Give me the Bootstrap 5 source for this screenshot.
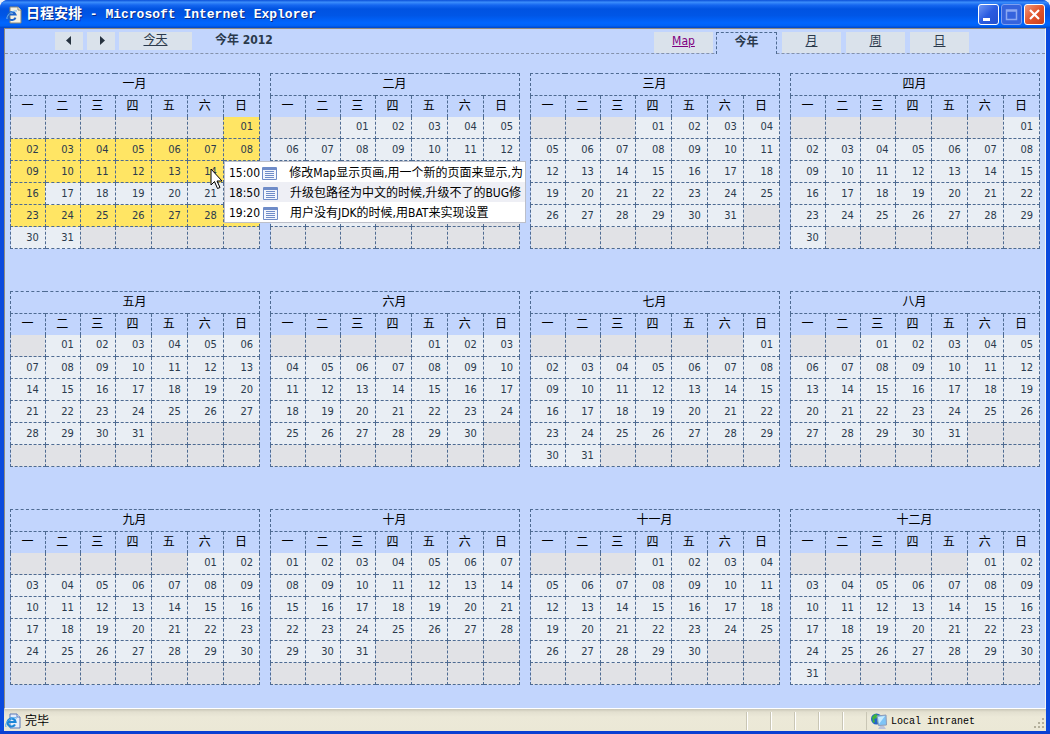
<!DOCTYPE html>
<html lang="zh-CN">
<head>
<meta charset="utf-8">
<meta name="viewport" content="width=device-width, initial-scale=1">
<title>日程安排</title>
<link href="https://cdn.jsdelivr.net/npm/bootstrap@5.3.0/dist/css/bootstrap.min.css" rel="stylesheet">
<style>
  :root { --page: #c2d5fd; --line: #4e6b92; --ink: #2b3a4c; --tile: #dae2eb; }
  body { background: #e9eef8; color: #000; font: 12px/16px "DejaVu Sans Condensed", "Liberation Sans", "Noto Sans CJK SC", sans-serif; }
  a { color: inherit; }
  .window { background: #0a49dd; border-radius: 8px 8px 0 0; overflow: hidden; }
  .titlebar { height: 28px; padding: 1px 5px 0 6px; color: #fff; font: bold 13px/20px "Liberation Mono", "Noto Sans CJK SC", monospace; text-shadow: 1px 1px 0 #0a2a84;
    background: linear-gradient(#0a4fd8 0, #3b8dfb 8%, #1667f0 18%, #0053e1 32%, #0056e6 55%, #0066ff 82%, #0062f5 92%, #0045c8 100%); }
  .titlebar .zh { font-size: 14px; }
  .winbtns { gap: 2px; }
  .winbtn { width: 21px; height: 21px; border: 1px solid #fff; border-radius: 3px; padding: 0; line-height: 0; background: linear-gradient(135deg, #6f97f4, #2a5be0 50%, #2450cf); }
  .winbtn.dim { border-color: #7d9ff0; background: #3563dd; }
  .winbtn.shut { background: linear-gradient(135deg, #f0987c, #e2552c 50%, #c9401c); }
  .winbtn svg { display: block; }
  .frame { padding: 0 4px; }
  .viewport { background: var(--page); border: 1px solid #8d8a80; border-right-color: #f4f4f4; border-bottom-color: #fff; }
  .toolbar { height: 25px; border-bottom: 1px dashed #8492ac; color: var(--ink); padding: 3px 76px 0 50px; }
  .tile { background: var(--tile); color: var(--ink); border: 0; height: 18px; padding: 0; }
  .arrow { width: 28px; line-height: 0; }
  .today { width: 73px; }
  .period { margin-left: 23px; }
  .tabs { gap: 5px; }
  .tabs a { width: 59px; height: 21px; line-height: 19px; }
  .tabs a.map { color: #80007f; margin-right: -2px; }
  .tabs a.current { width: 61px; height: 22px; background: var(--page); border: 1px dashed var(--line); border-bottom: 0; font-weight: bold; text-decoration: none; }
  .year { padding: 19px 0 23px; }
  .year .row { --bs-gutter-x: 10px; --bs-gutter-y: 0; row-gap: 42px; }
  .month { width: 100%; table-layout: fixed; border-collapse: collapse; color: var(--ink); font-size: 11px; }
  .month th, .month td { height: 22px; padding: 0 6px 0 0; border: 1px dashed var(--line); text-align: right; line-height: 18px; }
  .month th { padding: 0 1px 2px 0; font-weight: normal; font-size: 12px; line-height: 16px; color: #000; text-align: center; }
  .month thead tr:last-child th { height: 21px; padding-bottom: 0; border-bottom: 0; }
  .month tbody tr:first-child td { border-top: 0; }
  .month col.narrow { width: 14%; }
  .month td { background: #e9eef4; }
  .month td.blank { background: #e1e2e6; }
  .month td.busy { background: #ffe564; }
  .agenda { left: 219px; top: 88px; z-index: 2; width: 302px; background: #fff; border: 1px solid #bcbfc9; }
  .agenda li { height: 20px; line-height: 18px; padding: 2px 2px 0 4px; white-space: nowrap; }
  .agenda li:nth-child(2) { background: #eeeff5; }
  .agenda time { width: 34px; font-size: 12px; }
  .agenda svg { margin-right: 12px; flex: none; }
  .pointer { left: 205px; top: 95px; z-index: 3; }
  .status { height: 22px; background: linear-gradient(#c9c6b6 0, #e3e0d0 3px, #ece9d8 8px, #ebe8d6); padding: 2px 0 0 1px; }
  .pane { width: 24px; align-self: stretch; margin: 1px 0; border-left: 1px solid #c9c6b5; box-shadow: inset 1px 0 0 #fff; }
  .zone { width: 179px; padding-left: 4px; }
  .zone span { font: 10px/16px "Liberation Mono", monospace; padding-top: 2px; }
  .edge { height: 3px; background: #0a3fd2; }
</style>
</head>
<body>
<div class="window d-flex flex-column min-vh-100">
  <header class="titlebar d-flex align-items-center">
    <svg class="me-1 flex-shrink-0" width="16" height="18" viewBox="0 0 16 18" aria-hidden="true">
      <path d="M4 1h8l3 3v13H4z" fill="#f4f1e4" stroke="#8a8776"/><path d="M12 1v3h3" fill="#fff" stroke="#8a8776"/>
      <path d="M9.500 11.500A4 4 0 1 1 9.500 8.500H3" fill="none" stroke="#1b62c8" stroke-width="2"/><path d="M1 13C0 10 6 4 11 5" fill="none" stroke="#6db2f4"/>
    </svg>
    <span class="flex-grow-1 text-nowrap"><span class="zh">日程安排</span> - Microsoft Internet Explorer</span>
    <div class="winbtns d-flex">
      <button class="winbtn" aria-label="最小化"><svg width="19" height="19"><path d="M4 13h7v3H4z" fill="#fff"/></svg></button>
      <button class="winbtn dim" aria-label="最大化"><svg width="19" height="19"><path d="M4.500 5h10v9.500h-10zM4 6h11" fill="none" stroke="#8ba8f2" stroke-width="1.500"/></svg></button>
      <button class="winbtn shut" aria-label="关闭"><svg width="19" height="19"><path d="M5 5l9 9M14 5l-9 9" stroke="#fff" stroke-width="2.200"/></svg></button>
    </div>
  </header>
  <div class="frame flex-grow-1 d-flex flex-column">
    <main class="viewport flex-grow-1">
      <nav class="toolbar d-flex align-items-start">
        <button class="tile arrow" aria-label="上一年"><svg width="28" height="18"><path d="M16 4v9l-5-4.500z" fill="#26323f"/></svg></button>
        <button class="tile arrow ms-1" aria-label="下一年"><svg width="28" height="18"><path d="M13 4v9l5-4.500z" fill="#26323f"/></svg></button>
        <a class="tile today text-center ms-1" href="#">今天</a>
        <strong class="period">今年 2012</strong>
        <div class="tabs d-flex ms-auto text-center">
          <a class="tile map" href="#">Map</a>
          <a class="tile current" href="#" aria-current="page">今年</a>
          <a class="tile" href="#">月</a>
          <a class="tile" href="#">周</a>
          <a class="tile" href="#">日</a>
        </div>
      </nav>
      <div class="year"><div class="row row-cols-4 mx-0" id="months"></div></div>
    </main>
    <footer class="status d-flex align-items-center">
      <svg class="me-1" width="16" height="16" viewBox="0 0 16 16" aria-hidden="true">
        <path d="M5 1h7l3 3v11H5z" fill="#e6edfb" stroke="#5a78b8"/><path d="M12 1v3h3" fill="#fff" stroke="#5a78b8"/>
        <path d="M10 11.500A4 4 0 1 1 10.500 9H3" fill="none" stroke="#1c86d8" stroke-width="2.200"/><path d="M1 14C-1 10 6 3 12 5" fill="none" stroke="#4aa8ee"/>
      </svg>
      <span class="flex-grow-1">完毕</span>
      <i class="pane"></i><i class="pane"></i><i class="pane"></i><i class="pane"></i><i class="pane"></i>
      <i class="pane w-auto"></i>
      <div class="zone d-flex align-items-center">
        <svg class="me-1" width="16" height="17" viewBox="0 0 16 17" aria-hidden="true">
          <circle cx="5.500" cy="6" r="5.500" fill="#2464c8"/><path d="M1 4l3-3 3 1-1 3-3 1 1 3-2 1zM6 7l3 1-2 3z" fill="#3fb53a"/>
          <path d="M6 3l9-1 .5 10-8 .5z" fill="#7ec4f6" stroke="#8d9bb8"/><path d="M7 4l7-1-6 8z" fill="#c8ecff"/><path d="M9 13h4l2 3H7z" fill="#b9c2dc"/>
        </svg>
        <span class="flex-grow-1">Local intranet</span>
        <svg class="align-self-end" width="13" height="13" aria-hidden="true"><g fill="#b4b09c"><path d="M9 1h2v2H9zM9 5h2v2H9zM9 9h2v2H9zM5 5h2v2H5zM5 9h2v2H5zM1 9h2v2H1z"/></g></svg>
      </div>
    </footer>
  </div>
  <div class="edge"></div>
</div>

<template id="day-agenda">
  <svg class="pointer position-absolute" width="13" height="22" viewBox="0 0 13 22" aria-hidden="true"><path d="M1 1v16l3.500-3.500 3 7 2.500-1-3-6.500h5z" fill="#fff" stroke="#000"/></svg>
  <ul class="agenda position-absolute list-unstyled m-0"></ul>
</template>

<script>
  const year = 2012;
  const names = ['一', '二', '三', '四', '五', '六', '七', '八', '九', '十', '十一', '十二'];
  const weekdays = ['一', '二', '三', '四', '五', '六', '日'];
  const busyJanuary = new Set([1,2,3,4,5,6,7,8,9,10,11,12,13,14,15,16,23,24,25,26,27,28,29]);
  const events = [
    ['15:00', '修改Map显示页画,用一个新的页面来显示,为'],
    ['18:50', '升级包路径为中文的时候,升级不了的BUG修'],
    ['19:20', '用户没有JDK的时候,用BAT来实现设置']
  ];
  const grid = document.getElementById('months');
  names.forEach((name, m) => {
    const offset = (new Date(year, m, 1).getDay() + 6) % 7;
    const days = new Date(year, m + 1, 0).getDate();
    let body = '';
    for (let r = 0; r < 6; r++) {
      body += '<tr>';
      for (let c = 0; c < 7; c++) {
        const d = r * 7 + c - offset + 1;
        if (d < 1 || d > days) body += '<td class="blank"></td>';
        else body += `<td${m === 0 && busyJanuary.has(d) ? ' class="busy"' : ''}>${String(d).padStart(2, '0')}</td>`;
      }
      body += '</tr>';
    }
    const col = document.createElement('div');
    col.className = 'col position-relative';
    col.innerHTML = `<table class="month"><colgroup><col class="narrow"><col class="narrow"><col class="narrow"><col><col><col><col></colgroup>
      <thead><tr><th colspan="7">${name}月</th></tr><tr>${weekdays.map(w => `<th scope="col">${w}</th>`).join('')}</tr></thead><tbody>${body}</tbody></table>`;
    grid.append(col);
  });
  grid.firstElementChild.append(document.getElementById('day-agenda').content.cloneNode(true));
  const icon = '<svg width="15" height="13" aria-hidden="true"><path d="M.5.5h14v12H.5z" fill="#f2f5fd" stroke="#6f8cc8"/><path d="M1 1h13v2H1z" fill="#6f8cc8"/><path d="M3 4.500h9M3 6.500h9M3 8.500h9M3 10.500h9" stroke="#6f8cc8"/></svg>';
  document.querySelector('.agenda').innerHTML = events.map(([t, s]) =>
    `<li class="d-flex align-items-center"><time>${t}</time>${icon}<span>${s}</span></li>`).join('');
</script>
<script src="https://cdn.jsdelivr.net/npm/bootstrap@5.3.0/dist/js/bootstrap.bundle.min.js"></script>
</body>
</html>
